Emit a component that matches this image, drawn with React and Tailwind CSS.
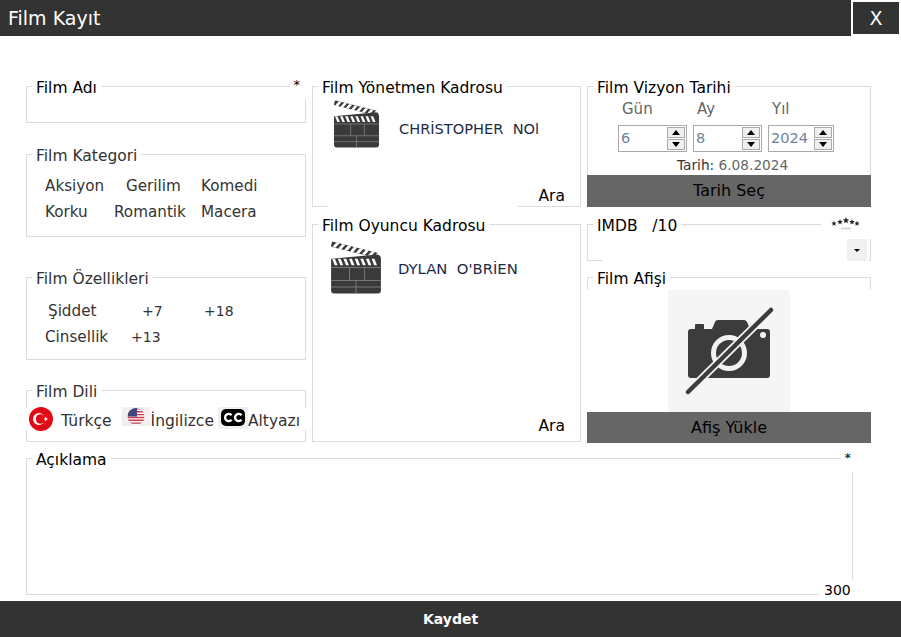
const font = { fontFamily: '"DejaVu Sans", "Liberation Sans", sans-serif' };

function Panel({ title, className = '', titleClass = 'text-black', children }) {
  return (
    <div className={`relative border border-[#dcdcdc] ${className}`}>
      <span className={`absolute -top-[9px] left-[5px] bg-white px-[4px] text-[15.5px] leading-[20px] whitespace-pre ${titleClass}`}>
        {title}
      </span>
      {children}
    </div>
  );
}

function Clapper({ className }) {
  const top = [0, 1, 2, 3, 4, 5, 6, 7];
  return (
    <svg viewBox="0 0 48 48" className={className}>
      <g transform="rotate(14 2 4)">
        <rect x="1" y="0" width="45" height="5" rx="1" fill="#3a3a3a" />
        {top.map((i) => (
          <path key={i} d={`M${5 + i * 5.6} 0h3l-2.6 5h-3z`} fill="#fff" />
        ))}
      </g>
      <path d="M1 16 L44 12 Q47 13 47 16 V45 Q47 48 44 48 H4 Q1 48 1 45 Z" fill="#3a3a3a" />
      {top.map((i) => (
        <path key={i} d={`M${2 + i * 5.2} 16h2.6l2.4 6h-2.6z`} fill="#fff" />
      ))}
      <path d="M1 24H47M1 36H47M1 42H47M18 24V36M32 24V36M24 36V48" stroke="#8a8a8a" strokeWidth="0.7" fill="none" />
    </svg>
  );
}

function Spin({ value, className }) {
  return (
    <div className={`flex h-[27px] items-center justify-between border border-[#aaa] pl-[2px] pr-[1px] ${className}`}>
      <span className="text-[14.5px] text-[#6f8398]">{value}</span>
      <div className="flex flex-col gap-[1px]">
        <div className="flex h-[11px] w-[18px] items-center justify-center border border-[#aaa] bg-[#f0f0f0]">
          <div className="h-0 w-0 border-x-[4px] border-b-[5px] border-x-transparent border-b-black" />
        </div>
        <div className="flex h-[11px] w-[18px] items-center justify-center border border-[#aaa] bg-[#f0f0f0]">
          <div className="h-0 w-0 border-x-[4px] border-t-[5px] border-x-transparent border-t-black" />
        </div>
      </div>
    </div>
  );
}

function TurkeyFlag() {
  return (
    <svg viewBox="0 0 24 24" className="h-[24px] w-[24px] shrink-0">
      <circle cx="12" cy="12" r="12" fill="#e30a17" />
      <circle cx="10" cy="12" r="6" fill="#fff" />
      <circle cx="11.6" cy="12" r="4.8" fill="#e30a17" />
      <path d="M14.2 12l4.6-1.5-2.8 3.9v-4.8l2.8 3.9z" fill="#fff" />
    </svg>
  );
}

function UsFlag() {
  return (
    <svg viewBox="0 0 30 20" className="h-[19px] w-[30px]">
      <rect width="30" height="20" fill="#f0f0f0" />
      <defs>
        <clipPath id="usround">
          <circle cx="15" cy="10" r="9" />
        </clipPath>
      </defs>
      <g clipPath="url(#usround)">
        <rect x="6" y="1" width="18" height="18" fill="#fff" />
        <path d="M6 2h18M6 5h18M6 8h18M6 11h18M6 14h18M6 17h18" stroke="#c8384c" strokeWidth="1.5" />
        <rect x="6" y="1" width="10" height="9" fill="#41477b" />
      </g>
    </svg>
  );
}

function CcIcon() {
  return (
    <svg viewBox="0 0 30 22" className="h-[22px] w-[30px]">
      <rect width="30" height="22" fill="#f0f0f0" />
      <rect x="3" y="2" width="24" height="17" rx="5" fill="#000" />
      <path d="M13.5 8.2A3.6 3.6 0 1 0 13.5 12.8M23.5 8.2A3.6 3.6 0 1 0 23.5 12.8" stroke="#fff" strokeWidth="2.4" fill="none" />
    </svg>
  );
}

function NoCamera() {
  return (
    <svg viewBox="0 0 122 122" className="h-[122px] w-[122px]">
      <rect width="122" height="122" fill="#f5f5f5" />
      <path d="M20 42a3 3 0 0 1 3-3h4v-4q0-1 1-1h7q1 0 1 1v4h8l3-7q.5-2 3-2h26q2 0 3 2l3 7h17a3 3 0 0 1 3 3v43a3 3 0 0 1-3 3H23a3 3 0 0 1-3-3z" fill="#3c3c3c" />
      <circle cx="61" cy="63" r="15.5" fill="none" stroke="#f2f2f2" strokeWidth="5" />
      <circle cx="95" cy="45" r="3" fill="#f5f5f5" />
      <path d="M20 102L103 20" stroke="#f5f5f5" strokeWidth="8" />
      <path d="M20 102L103 20" stroke="#3c3c3c" strokeWidth="4.5" strokeLinecap="round" />
    </svg>
  );
}

const star = (x, y, r) => {
  const pts = [];
  for (let i = 0; i < 10; i++) {
    const a = -Math.PI / 2 + (i * Math.PI) / 5;
    const d = i % 2 ? r * 0.42 : r;
    pts.push(`${(x + d * Math.cos(a)).toFixed(2)},${(y + d * Math.sin(a)).toFixed(2)}`);
  }
  return pts.join(' ');
};

function Stars() {
  const list = [[3, 7.5, 2.8], [9, 6, 3], [15, 4.5, 3.4], [21, 6, 3], [26, 7.5, 2.8]];
  return (
    <svg viewBox="0 0 30 15" className="h-[15px] w-[30px]">
      {list.map(([x, y, r]) => (
        <polygon key={x} points={star(x, y, r)} fill="#222" />
      ))}
      <path d="M10 12.5h10" stroke="#cfcfcf" strokeWidth="1.5" />
    </svg>
  );
}

export default function App() {
  return (
    <div className="flex h-[637px] w-[901px] flex-col bg-white" style={font}>
      <header className="flex h-9 shrink-0">
        <div className="flex h-9 w-[851px] items-center bg-[#333] pl-[8px] text-[19px] text-white">Film Kayıt</div>
        <button className="ml-[2px] mt-[2px] h-8 w-[46px] bg-[#333] text-[19px] text-white">X</button>
      </header>

      <main className="flex flex-1 flex-col pl-[26px]">
        <div className="flex gap-[6px] pt-[50px]">
          <div className="flex w-[280px] flex-col">
            <Panel title="Film Adı" className="h-[37px]">
              <div className="absolute -right-px -top-px h-[13px] w-[16px] bg-white" />
              <span className="absolute -top-[10px] right-[5px] text-[13px] leading-[16px]">*</span>
            </Panel>
            <Panel title="Film Kategori" titleClass="text-[#333]" className="mt-[31px] h-[83px]">
              <div className="grid grid-cols-[69px_87px_1fr] gap-y-[6px] pl-[18px] pt-[21px] text-[15.2px] leading-[20px] text-[#333]">
                <span>Aksiyon</span>
                <span className="pl-[12px]">Gerilim</span>
                <span>Komedi</span>
                <span>Korku</span>
                <span>Romantik</span>
                <span>Macera</span>
              </div>
            </Panel>
            <Panel title="Film Özellikleri" titleClass="text-[#333]" className="mt-[40px] h-[83px]">
              <div className="grid grid-cols-[86px_73px_1fr] gap-y-[6px] pl-[18px] pt-[23px] text-[15.2px] leading-[20px] text-[#333]">
                <span className="pl-[3px]">Şiddet</span>
                <span className="pl-[11px] text-[14px]">+7</span>
                <span className="text-[14px]">+18</span>
                <span>Cinsellik</span>
                <span className="text-[14px]">+13</span>
              </div>
            </Panel>
            <Panel title="Film Dili" titleClass="text-[#333]" className="mt-[30px] h-[52px]">
              <div className="-mx-px mt-[17px] flex h-[21px] items-center bg-white pl-[3px] text-[15.5px] text-[#333]">
                <TurkeyFlag />
                <span className="ml-[8px] translate-y-[3px]">Türkçe</span>
                <span className="ml-[9px] -translate-y-[2px]"><UsFlag /></span>
                <span className="translate-y-[3px]">İngilizce</span>
                <span className="ml-[4px] -translate-y-[1px]"><CcIcon /></span>
                <span className="translate-y-[3px]">Altyazı</span>
              </div>
            </Panel>
          </div>

          <div className="flex w-[269px] flex-col">
            <Panel title="Film Yönetmen Kadrosu" className="h-[121px]">
              <div className="flex items-center pl-[20px] pt-[13px]">
                <Clapper className="h-[48px] w-[47px]" />
                <span className="ml-[19px] translate-y-[5px] whitespace-pre text-[14.6px] text-[#1c2c48]">CHRİSTOPHER  NOl</span>
              </div>
              <div className="absolute -bottom-px left-[15px] h-[6px] w-[190px] bg-white" />
              <span className="absolute bottom-0 right-[15px] text-[15.5px] leading-[20px]">Ara</span>
            </Panel>
            <Panel title="Film Oyuncu Kadrosu" className="mt-[17px] h-[218px]">
              <div className="flex items-center pl-[17px] pt-[15px]">
                <Clapper className="h-[55px] w-[52px]" />
                <span className="ml-[16px] translate-y-[2px] whitespace-pre text-[14.8px] text-[#1c2c48]">DYLAN  O'BRİEN</span>
              </div>
              <span className="absolute bottom-[5px] right-[15px] text-[15.5px] leading-[20px]">Ara</span>
            </Panel>
          </div>

          <div className="flex w-[284px] flex-col">
            <Panel title="Film Vizyon Tarihi" className="flex h-[121px] flex-col">
              <div className="flex pl-[34px] pt-[12px] text-[15px] leading-[20px] text-[#666]">
                <span className="w-[75px]">Gün</span>
                <span className="w-[75px]">Ay</span>
                <span>Yıl</span>
              </div>
              <div className="flex gap-[6px] pl-[30px] pt-[6px]">
                <Spin value="6" className="w-[69px]" />
                <Spin value="8" className="w-[69px]" />
                <Spin value="2024" className="w-[66px]" />
              </div>
              <div className="pl-[89px] pt-[3px] text-[13.7px] leading-[20px] text-[#333]">
                Tarih: <span className="text-[#666]">6.08.2024</span>
              </div>
              <button className="-mx-px -mb-px mt-auto h-[32px] shrink-0 bg-[#666] pb-px text-[16px] text-black">Tarih Seç</button>
            </Panel>
            <Panel title="IMDB   /10" className="mt-[17px] h-[37px]">
              <div className="absolute -right-px -top-px h-[15px] w-[50px] bg-white" />
              <div className="absolute -top-[9px] right-[9px]">
                <Stars />
              </div>
              <div className="absolute -bottom-px left-[15px] right-[2px] flex h-[22px] justify-end bg-white pr-[1px]">
                <div className="flex h-[22px] w-[20px] items-center justify-center bg-[#f0f0f0]">
                  <div className="h-0 w-0 border-x-[3px] border-t-[3px] border-x-transparent border-t-black" />
                </div>
              </div>
            </Panel>
            <Panel title="Film Afişi" className="mt-[16px] h-[13px] border-b-0" />
            <div className="mx-auto">
              <NoCamera />
            </div>
            <button className="h-[31px] bg-[#666] text-[16px] text-black">Afiş Yükle</button>
          </div>
        </div>

        <Panel title="Açıklama" className="mt-[15px] h-[137px] w-[827px]">
          <div className="absolute -right-px -top-px h-[14px] w-[12px] bg-white" />
          <span className="absolute -top-[9px] right-[1px] text-[13px] leading-[16px]">*</span>
          <span className="absolute -bottom-px -right-px h-[15px] w-[34px] bg-white pl-[5px] text-[14px] leading-[20px]">300</span>
        </Panel>
      </main>

      <button className="mt-[6px] h-9 shrink-0 bg-[#333] pt-px text-[14px] font-bold text-white">Kaydet</button>
    </div>
  );
}
